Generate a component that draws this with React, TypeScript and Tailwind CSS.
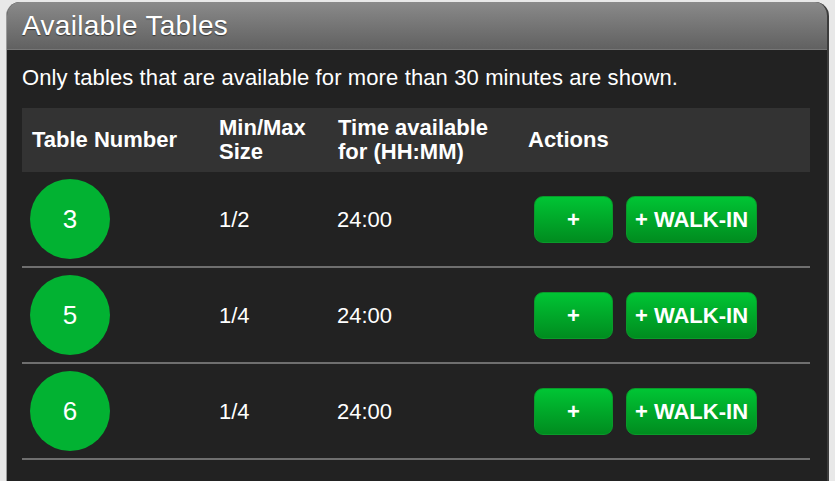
import React from "react";

const rows = [
  { n: "3", size: "1/2", time: "24:00" },
  { n: "5", size: "1/4", time: "24:00" },
  { n: "6", size: "1/4", time: "24:00" },
];

export default function App() {
  return (
    <div
      className="h-[481px] overflow-hidden bg-[#e8e8e8] pl-[6px] pr-[6px] pt-[2px]"
      style={{ fontFamily: '"Liberation Sans", Arial, sans-serif' }}
    >
      <div className="h-[500px] overflow-hidden rounded-t-[14px] border-l border-r-2 border-l-[#9a9a9a] border-r-[#3c3c3c] bg-[#222222]">
        <div className="flex h-[48px] items-center border-b border-[#767676] bg-gradient-to-b from-[#8a8a8a] to-[#616161] pl-[15px] text-[28px] tracking-[0.3px] text-white [text-shadow:0_1px_1px_rgba(0,0,0,0.5)]">
          Available Tables
        </div>
        <div className="pl-[15px]">
          <div className="mt-[15px] text-[22px] leading-[26px] tracking-[0.12px] text-white">
            Only tables that are available for more than 30 minutes are shown.
          </div>
          <div className="mt-[17px] w-[788px]">
            <div className="grid h-[64px] grid-cols-[187px_119px_190px_1fr] items-center bg-[#333333] text-[22px] font-bold leading-[24px] text-white">
              <div className="pl-[10px]">Table Number</div>
              <div className="pl-[10px]">
                Min/Max
                <br />
                Size
              </div>
              <div className="pl-[10px]">
                Time available
                <br />
                for (HH:MM)
              </div>
              <div className="pl-[10px]">Actions</div>
            </div>
            {rows.map((r) => (
              <div
                key={r.n}
                className="grid h-[96px] grid-cols-[187px_119px_190px_1fr] items-center border-b-2 border-[#6f6f6f] text-[22px] text-white"
              >
                <div className="pl-[8px]">
                  <div className="flex h-[80px] w-[80px] items-center justify-center rounded-full bg-[#02b232] text-[26px]">
                    {r.n}
                  </div>
                </div>
                <div className="pl-[10px]">{r.size}</div>
                <div className="pl-[9px]">{r.time}</div>
                <div className="flex gap-[13px] pl-[16px]">
                  <button className="flex h-[47px] w-[79px] items-center justify-center rounded-[9px] border border-[#0a9a2a] bg-gradient-to-b from-[#00c534] to-[#008c1f] text-[22px] font-bold text-white">
                    +
                  </button>
                  <button className="flex h-[47px] w-[131px] items-center justify-center rounded-[9px] border border-[#0a9a2a] bg-gradient-to-b from-[#00c534] to-[#008c1f] text-[22px] font-bold text-white">
                    + WALK-IN
                  </button>
                </div>
              </div>
            ))}
          </div>
        </div>
      </div>
    </div>
  );
}
